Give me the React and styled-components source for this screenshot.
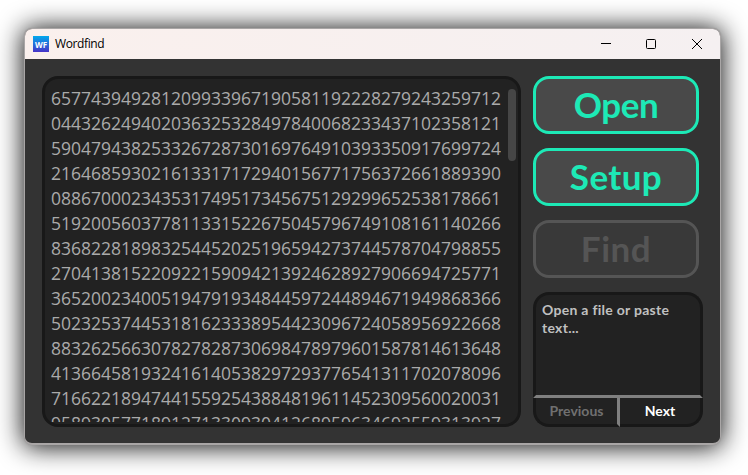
import React from "react";
import styled, { createGlobalStyle } from "styled-components";

const GlobalStyle = createGlobalStyle`
  * { box-sizing: border-box; }
  html, body { margin: 0; background: #fff; overflow: hidden; }
  button { margin: 0; padding: 0; }
`;

const Desktop = styled.main`
  width: 748px;
  height: 475px;
  padding: 28px 0 0 24px;
  overflow: hidden;
`;

const Window = styled.div`
  width: 697px;
  height: 417px;
  display: flex;
  flex-direction: column;
  border: 1px solid #a9a6a6;
  border-bottom-width: 2px;
  border-radius: 8px;
  background: #333;
  overflow: hidden;
  box-shadow: 0 0 1px 0 #8c8c8c, 0 1px 26px 1px rgba(0, 0, 0, 0.95);
`;

const TitleBar = styled.header`
  height: 30px;
  flex: none;
  display: flex;
  align-items: center;
  padding-left: 8px;
  background: linear-gradient(90deg, #faf0ed, #f5f0f1);
`;

const Logo = styled.div`
  width: 16px;
  height: 16px;
  display: grid;
  place-items: center;
  background: linear-gradient(#02a9ec, #4733c8);
  color: #fff;
  font: 700 8px/15px "Open Sans", sans-serif;
`;

const Title = styled.span`
  flex: 1;
  margin-left: 6px;
  color: #000;
  font: 400 12px/16px "Open Sans", sans-serif;
  letter-spacing: -0.38px;
`;

const Controls = styled.div`
  display: flex;
  gap: 34px;
  margin-right: 17px;

  svg { display: block; }
`;

const Content = styled.div`
  flex: 1;
  display: flex;
  align-items: flex-start;
  gap: 12px;
  padding: 17px 0 0 17px;
`;

const TextPane = styled.section`
  width: 479px;
  height: 351px;
  display: flex;
  justify-content: space-between;
  padding: 7px 2px 2px 6px;
  border: 3px solid #181818;
  border-radius: 16px;
  background: #222;
`;

const Digits = styled.div`
  height: 336px;
  overflow: hidden;
  color: #aaa;
  font: 400 17.5px/25px "Open Sans", sans-serif;
  letter-spacing: -0.005px;
  white-space: pre;
`;

const ScrollThumb = styled.div`
  width: 8px;
  height: 72px;
  margin-top: 3px;
  border-radius: 4px;
  background: #464646;
`;

const Sidebar = styled.aside`
  width: 170px;
  display: flex;
  flex-direction: column;
  gap: 14px;
`;

const ActionButton = styled.button`
  width: 166px;
  height: 58px;
  padding-bottom: 2px;
  border: 3px solid ${(p) => (p.disabled ? "#555" : "#1de9b6")};
  border-radius: 16px;
  background: ${(p) => (p.disabled ? "#393939" : "#494949")};
  color: ${(p) => (p.disabled ? "#555" : "#1de9b6")};
  font: 700 35px/50px Lato, sans-serif;
  letter-spacing: ${(p) => p.$spacing}px;
`;

const InfoPanel = styled.section`
  width: 170px;
  height: 135px;
  display: flex;
  flex-direction: column;
`;

const Message = styled.p`
  height: 106px;
  margin: 0;
  padding: 6px;
  border: 3px solid #181818;
  border-bottom-color: #808080;
  border-radius: 16px 16px 0 0;
  background: #222;
  color: #c0c0c0;
  font: 700 14px/18px Lato, sans-serif;
  letter-spacing: 0.28px;
`;

const Pager = styled.nav`
  height: 29px;
  display: grid;
  grid-template-columns: 87px 83px;
`;

const PageButton = styled.button`
  border: 0 solid #181818;
  background: #222;
  color: ${(p) => (p.disabled ? "#707070" : "#fff")};
  font: 700 14px/26px Lato, sans-serif;
`;

const PreviousButton = styled(PageButton)`
  border-width: 0 3px 3px;
  border-right-color: #808080;
  border-radius: 0 0 0 16px;
`;

const NextButton = styled(PageButton)`
  border-width: 0 3px 3px 0;
  border-radius: 0 0 16px 0;
`;

const lines = [
  "657743949281209933967190581192228279243259712",
  "044326249402036325328497840068233437102358121",
  "590479438253326728730169764910393350917699724",
  "216468593021613317172940156771756372661889390",
  "088670002343531749517345675129299652538178661",
  "519200560377811331522675045796749108161140266",
  "836822818983254452025196594273744578704798855",
  "270413815220922159094213924628927906694725771",
  "365200234005194791934844597244894671949868366",
  "502325374453181623338954423096724058956922668",
  "883262566307827828730698478979601587814613648",
  "413664581932416140538297293776541311702078096",
  "716622189474415592543884819611452309560020031",
  "958930577189127133093041268959634692559313927",
];

export default function App() {
  return (
    <Desktop>
      <GlobalStyle />
      <Window>
        <TitleBar>
          <Logo>WF</Logo>
          <Title>Wordfind</Title>
          <Controls>
            <svg width="12" height="12" viewBox="0 0 12 12">
              <path d="M2 5.5h10" stroke="#000" />
            </svg>
            <svg width="12" height="12" viewBox="0 0 12 12">
              <rect x="1.5" y="1.5" width="9" height="9" rx="1" fill="none" stroke="#000" />
            </svg>
            <svg width="12" height="12" viewBox="0 0 12 12">
              <path d="M1 1l10 10M11 1L1 11" stroke="#000" />
            </svg>
          </Controls>
        </TitleBar>
        <Content>
          <TextPane>
            <Digits>{lines.join("\n")}</Digits>
            <ScrollThumb />
          </TextPane>
          <Sidebar>
            <ActionButton $spacing={-0.4}>Open</ActionButton>
            <ActionButton $spacing={0.4}>Setup</ActionButton>
            <ActionButton $spacing={0.5} disabled>Find</ActionButton>
            <InfoPanel>
              <Message>Open a file or paste text...</Message>
              <Pager>
                <PreviousButton disabled>Previous</PreviousButton>
                <NextButton>Next</NextButton>
              </Pager>
            </InfoPanel>
          </Sidebar>
        </Content>
      </Window>
    </Desktop>
  );
}
